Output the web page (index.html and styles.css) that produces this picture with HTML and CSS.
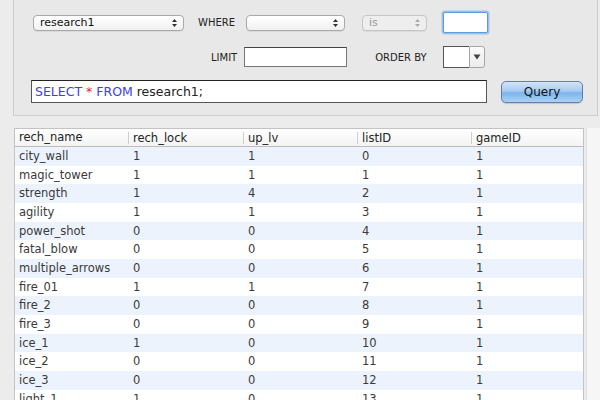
FILE: index.html
```html
<!DOCTYPE html>
<html>
<head>
<meta charset="utf-8">
<link rel="stylesheet" href="styles.css">
</head>
<body>
<div class="panel">
  <div class="row row1">
    <div class="popup main-select"><span class="popup-text">research1</span><svg class="updown" width="7" height="10" viewBox="0 0 7 10"><path d="M1 4 L3.5 1 L6 4 Z M1 6 L3.5 9 L6 6 Z" fill="#333"/></svg></div>
    <span class="label where">WHERE</span>
    <div class="popup col-select"><span class="popup-text"></span><svg class="updown" width="7" height="10" viewBox="0 0 7 10"><path d="M1 4 L3.5 1 L6 4 Z M1 6 L3.5 9 L6 6 Z" fill="#333"/></svg></div>
    <div class="popup op-select disabled"><span class="popup-text">is</span><svg class="updown" width="7" height="10" viewBox="0 0 7 10"><path d="M1 4 L3.5 1 L6 4 Z M1 6 L3.5 9 L6 6 Z" fill="#aaa"/></svg></div>
    <div class="field focus-field"></div>
  </div>
  <div class="row row2">
    <span class="label limit">LIMIT</span>
    <div class="field limit-field"></div>
    <span class="label orderby">ORDER BY</span>
    <div class="combo"><div class="combo-field"></div><div class="combo-btn"><svg width="8" height="6" viewBox="0 0 8 6"><path d="M0.5 0.5 L7.5 0.5 L4 5.5 Z" fill="#444"/></svg></div></div>
  </div>
  <div class="row row3">
    <div class="sql"><span class="kw">SELECT</span> <span class="star">*</span> <span class="kw">FROM</span> research1;</div>
    <div class="query-btn">Query</div>
  </div>
</div>

<div class="table-area">
  <div class="table">
    <div class="thead">
      <div class="th">rech_name</div>
      <div class="th">rech_lock</div>
      <div class="th">up_lv</div>
      <div class="th">listID</div>
      <div class="th">gameID</div>
    </div>
    <div class="tr odd"><div>city_wall</div><div>1</div><div>1</div><div>0</div><div>1</div></div>
    <div class="tr"><div>magic_tower</div><div>1</div><div>1</div><div>1</div><div>1</div></div>
    <div class="tr odd"><div>strength</div><div>1</div><div>4</div><div>2</div><div>1</div></div>
    <div class="tr"><div>agility</div><div>1</div><div>1</div><div>3</div><div>1</div></div>
    <div class="tr odd"><div>power_shot</div><div>0</div><div>0</div><div>4</div><div>1</div></div>
    <div class="tr"><div>fatal_blow</div><div>0</div><div>0</div><div>5</div><div>1</div></div>
    <div class="tr odd"><div>multiple_arrows</div><div>0</div><div>0</div><div>6</div><div>1</div></div>
    <div class="tr"><div>fire_01</div><div>1</div><div>1</div><div>7</div><div>1</div></div>
    <div class="tr odd"><div>fire_2</div><div>0</div><div>0</div><div>8</div><div>1</div></div>
    <div class="tr"><div>fire_3</div><div>0</div><div>0</div><div>9</div><div>1</div></div>
    <div class="tr odd"><div>ice_1</div><div>1</div><div>0</div><div>10</div><div>1</div></div>
    <div class="tr"><div>ice_2</div><div>0</div><div>0</div><div>11</div><div>1</div></div>
    <div class="tr odd"><div>ice_3</div><div>0</div><div>0</div><div>12</div><div>1</div></div>
    <div class="tr"><div>light_1</div><div>1</div><div>0</div><div>13</div><div>1</div></div>
  </div>
  <div class="scroll-track"></div>
</div>
</body>
</html>
```

FILE: styles.css
```css
* { box-sizing: border-box; }

html, body {
  margin: 0;
  padding: 0;
  width: 600px;
  height: 400px;
  overflow: hidden;
  background: #ececec;
  font-family: "DejaVu Sans", "Noto Sans", sans-serif;
  color: #222;
}

.panel {
  margin-left: 13px;
  margin-right: 2px;
  height: 116px;
  background: #e8e8e8;
  border-left: 1px solid #cdcdcd;
  border-right: 1px solid #cdcdcd;
  border-bottom: 1px solid #cdcdcd;
}

.row {
  display: flex;
  align-items: center;
}

.row1 { padding-top: 12px; height: 33px; }
.row2 { margin-top: 13px; height: 22px; }
.row3 { margin-top: 12px; height: 23px; }

.label {
  font-size: 10px;
  color: #222;
}

.popup {
  display: flex;
  align-items: center;
  justify-content: space-between;
  height: 16px;
  background: linear-gradient(#ffffff, #f1f1f1);
  border: 1px solid #a9a9a9;
  border-radius: 4px;
  box-shadow: 0 1px 0 rgba(0,0,0,0.06);
  padding: 0 5px 0 6px;
  font-size: 11px;
}

.popup-text { color: #111; }

.main-select { margin-left: 19px; width: 151px; }
.where { margin-left: 14px; }
.col-select { margin-left: 11px; width: 99px; }
.op-select { margin-left: 17px; width: 65px; border-color: #c6c6c6; background: #eeeeee; }
.op-select .popup-text { color: #999; }

.field {
  background: #fff;
  border: 1px solid #777;
  border-top-color: #444;
}

.focus-field {
  margin-left: 16px;
  width: 45px;
  height: 21px;
  border: 1px solid #5d9ad8;
  box-shadow: 0 0 0 1.5px #9cc2ec;
  border-radius: 2px;
}

.limit { margin-left: 197px; }
.limit-field { margin-left: 7px; width: 103px; height: 20px; }
.orderby { margin-left: 28px; }

.combo {
  margin-left: 16px;
  display: flex;
  height: 22px;
  width: 42px;
}
.combo-field {
  width: 26px;
  height: 22px;
  background: #fff;
  border: 1px solid #555;
  border-right: none;
}
.combo-btn {
  width: 16px;
  height: 22px;
  display: flex;
  align-items: center;
  justify-content: center;
  background: linear-gradient(#fbfbfb, #ececec);
  border: 1px solid #a5a5a5;
  border-radius: 0 3px 3px 0;
}

.sql {
  margin-left: 17px;
  width: 456px;
  height: 23px;
  background: #fff;
  border: 1px solid #555;
  border-top-color: #222;
  font-size: 12.5px;
  line-height: 21px;
  padding-left: 3px;
  color: #222;
  white-space: nowrap;
}
.kw { color: #3d3df0; }
.star { color: #e8262a; }

.query-btn {
  margin-left: 14px;
  width: 82px;
  height: 22px;
  border: 1px solid #6a7ca6;
  border-radius: 5px;
  background: linear-gradient(#d3e5f8 0%, #a6cbf1 45%, #7db4ec 55%, #a9d3f7 100%);
  font-size: 12px;
  color: #111;
  display: flex;
  align-items: center;
  justify-content: center;
  box-shadow: 0 1px 1px rgba(0,0,0,0.15);
}

.table-area {
  margin-top: 12px;
  margin-left: 14px;
  display: flex;
  height: 272px;
}

.table {
  width: 570px;
  background: #fff;
  border: 1px solid #c3c3c3;
  border-bottom: none;
  font-size: 11.5px;
  color: #3a3a3a;
}

.thead, .tr {
  display: grid;
  grid-template-columns: 113px 115px 114px 114px 1fr;
}

.thead {
  height: 18px;
  background: linear-gradient(#ffffff, #f3f3f3);
  border-bottom: 1px solid #bdbdbd;
  color: #222;
}

.th {
  padding-left: 4px;
  line-height: 17px;
}
.th + .th { border-left: 1px solid #cfcfcf; margin: 3px 0 2px 0; line-height: 12px; }

.tr { height: 18.67px; line-height: 18.67px; }
.tr > div { padding-left: 4px; white-space: nowrap; }
.tr > div + div { padding-left: 5px; }
.tr.odd { background: #edf3fd; }

.scroll-track {
  margin-left: 2px;
  flex: 1;
  background: #f6f6f6;
  border-left: 1px solid #e0e0e0;
}
```
